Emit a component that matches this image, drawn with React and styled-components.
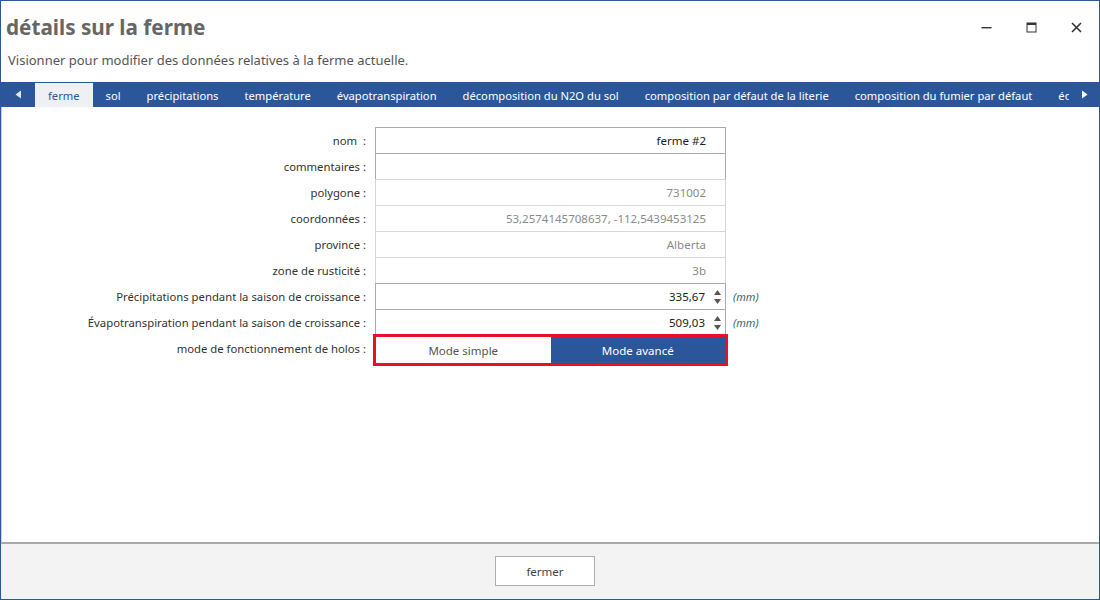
import styled, { createGlobalStyle } from "styled-components";

const Global = createGlobalStyle`
  html, body { margin: 0; padding: 0; background: #fff; }
  body { font-family: "Noto Sans", "Open Sans", sans-serif; }
  * { box-sizing: border-box; }
`;

const Window = styled.div`
  width: 1100px;
  height: 600px;
  border: 1px solid #2b579a;
  display: flex;
  flex-direction: column;
  background: #fff;
  overflow: hidden;
`;

const Header = styled.div`
  padding: 0 0 0 5px;
`;

const TitleRow = styled.div`
  display: flex;
  align-items: center;
  height: 52px;
`;

const Title = styled.h1`
  margin: 0;
  flex: 1;
  font-size: 20.7px;
  font-weight: 700;
  color: #666;
`;

const Controls = styled.div`
  display: flex;
  align-items: center;
  height: 100%;
  padding-right: 13px;
  gap: 25px;
`;

const CtrlBtn = styled.div`
  width: 20px;
  height: 20px;
  display: flex;
  align-items: center;
  justify-content: center;
  color: #333;
`;

const Subtitle = styled.div`
  font-size: 13px;
  color: #555;
  padding-left: 2px;
  height: 29px;
  line-height: 14px;
`;

const TabBar = styled.div`
  height: 25px;
  background: #2b579a;
  display: flex;
  align-items: stretch;
`;

const Arrow = styled.div`
  width: ${p => p.w}px;
  display: flex;
  align-items: center;
  justify-content: center;
  flex-shrink: 0;
`;

const TabStrip = styled.div`
  flex: 1;
  display: flex;
  overflow: hidden;
  padding-top: 1px;
`;

const Tab = styled.div`
  padding: 0 13px;
  white-space: nowrap;
  font-size: 11.2px;
  display: flex;
  align-items: center;
  color: ${p => (p.active ? "#2b579a" : "#fff")};
  background: ${p => (p.active ? "#eef0f4" : "transparent")};
`;

const Content = styled.div`
  flex: 1;
  border-bottom: 2px solid #a9a9a9;
  border-left: 1px solid #d0d0d0;
  padding-top: 20px;
`;

const Form = styled.div`
  display: grid;
  grid-template-columns: 364px 351px auto;
  grid-auto-rows: 26px;
  column-gap: 9px;
  align-items: center;
`;

const Label = styled.div`
  text-align: right;
  font-size: 11.3px;
  color: #333;
  white-space: pre;
`;

const Field = styled.div`
  height: 27px;
  align-self: start;
  border: 1px solid ${p => (p.ro ? "#d6d6d6" : "#ababab")};
  display: flex;
  align-items: center;
  justify-content: flex-end;
  padding-right: ${p => (p.spin ? "4px" : "19px")};
  font-size: 11.5px;
  color: ${p => (p.ro ? "#8a8a8a" : "#222")};
  background: #fff;
`;

const Spin = styled.div`
  display: flex;
  flex-direction: column;
  margin-left: 9px;
  gap: 4px;
`;

const Unit = styled.div`
  font-size: 11px;
  font-style: italic;
  color: #3f5f66;
  margin-left: -2px;
`;

const Toggle = styled.div`
  height: 32px;
  align-self: start;
  margin-left: -2px;
  margin-top: -1px;
  width: 355px;
  border: 3px solid #e81123;
  display: flex;
`;

const ModeBtn = styled.div`
  flex: 1;
  display: flex;
  align-items: center;
  justify-content: center;
  font-size: 11.5px;
  color: ${p => (p.active ? "#fff" : "#555")};
  background: ${p => (p.active ? "#2b579a" : "#fff")};
`;

const Footer = styled.div`
  height: 55px;
  background: #f3f3f3;
  display: flex;
  justify-content: center;
  padding: 12px 10px 0 0;
`;

const CloseButton = styled.button`
  width: 100px;
  height: 30px;
  border: 1px solid #adadad;
  background: #fff;
  font-family: "Noto Sans", sans-serif;
  font-size: 11.5px;
  color: #444;
`;

const tabs = [
  "ferme",
  "sol",
  "précipitations",
  "température",
  "évapotranspiration",
  "décomposition du N2O du sol",
  "composition par défaut de la literie",
  "composition du fumier par défaut",
  "équations",
];

const Tri = ({ dir }) => (
  <svg width="7" height="9" viewBox="0 0 7 9">
    {dir === "left" ? (
      <path d="M6 0.5 L0.5 4.5 L6 8.5 Z" fill="#fff" opacity="0.85" />
    ) : (
      <path d="M1 0.5 L6.5 4.5 L1 8.5 Z" fill="#fff" />
    )}
  </svg>
);

const SpinArrows = () => (
  <Spin>
    <svg width="7" height="5" viewBox="0 0 7 5">
      <path d="M3.5 0 L7 5 L0 5 Z" fill="#555" />
    </svg>
    <svg width="7" height="5" viewBox="0 0 7 5">
      <path d="M0 0 L7 0 L3.5 5 Z" fill="#555" />
    </svg>
  </Spin>
);

const rows = [
  { label: "nom  :", value: "ferme #2" },
  { label: "commentaires :", value: "" },
  { label: "polygone :", value: "731002", ro: true },
  { label: "coordonnées :", value: "53,2574145708637, -112,5439453125", ro: true },
  { label: "province :", value: "Alberta", ro: true },
  { label: "zone de rusticité :", value: "3b", ro: true },
  { label: "Précipitations pendant la saison de croissance :", value: "335,67", spin: true },
  { label: "Évapotranspiration pendant la saison de croissance :", value: "509,03", spin: true },
];

export default function App() {
  return (
    <Window>
      <Global />
      <Header>
        <TitleRow>
          <Title>détails sur la ferme</Title>
          <Controls>
            <CtrlBtn>
              <svg width="11" height="11" viewBox="0 0 11 11">
                <rect x="0.5" y="5" width="10" height="1.4" fill="#333" />
              </svg>
            </CtrlBtn>
            <CtrlBtn>
              <svg width="11" height="11" viewBox="0 0 11 11">
                <rect x="1" y="1" width="9" height="9" fill="none" stroke="#333" strokeWidth="1" />
                <rect x="1" y="1" width="9" height="2" fill="#333" />
              </svg>
            </CtrlBtn>
            <CtrlBtn>
              <svg width="11" height="11" viewBox="0 0 11 11">
                <path d="M1 1 L10 10 M10 1 L1 10" stroke="#333" strokeWidth="1.6" />
              </svg>
            </CtrlBtn>
          </Controls>
        </TitleRow>
        <Subtitle>Visionner pour modifier des données relatives à la ferme actuelle.</Subtitle>
      </Header>
      <TabBar>
        <Arrow w={34}>
          <Tri dir="left" />
        </Arrow>
        <TabStrip>
          {tabs.map((t, i) => (
            <Tab key={t} active={i === 0}>
              {t}
            </Tab>
          ))}
        </TabStrip>
        <Arrow w={30}>
          <Tri dir="right" />
        </Arrow>
      </TabBar>
      <Content>
        <Form>
          {rows.map(r => [
            <Label key={r.label + "l"}>{r.label}</Label>,
            <Field key={r.label + "f"} ro={r.ro} spin={r.spin}>
              {r.value}
              {r.spin && <SpinArrows />}
            </Field>,
            <Unit key={r.label + "u"}>{r.spin ? "(mm)" : ""}</Unit>,
          ])}
          <Label>mode de fonctionnement de holos :</Label>
          <Toggle>
            <ModeBtn>Mode simple</ModeBtn>
            <ModeBtn active>Mode avancé</ModeBtn>
          </Toggle>
          <Unit />
        </Form>
      </Content>
      <Footer>
        <div>
          <CloseButton>fermer</CloseButton>
        </div>
      </Footer>
    </Window>
  );
}
